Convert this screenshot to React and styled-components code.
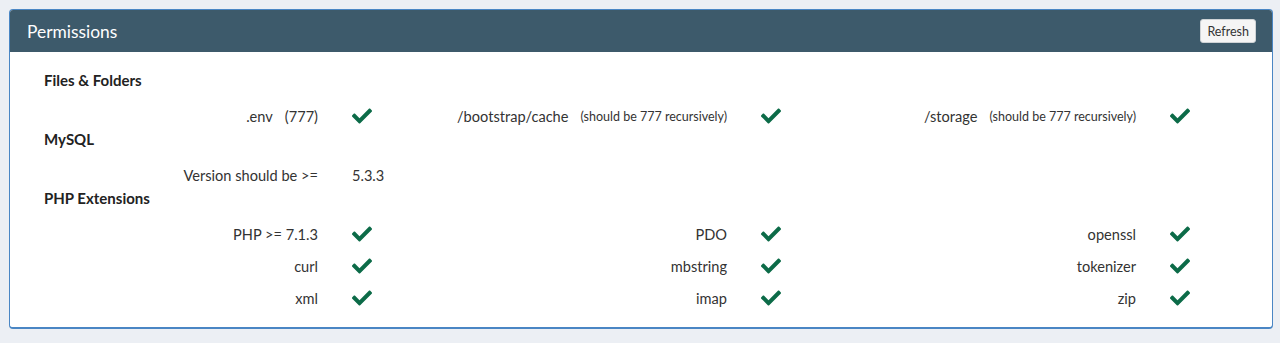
import React from 'react';
import styled, { createGlobalStyle } from 'styled-components';
import { FaCheck } from 'react-icons/fa';

const GlobalStyle = createGlobalStyle`
  html, body {
    margin: 0;
    padding: 0;
    background: #eceff4;
  }
  body {
    font-family: Lato, "Noto Sans", "Liberation Sans", sans-serif;
    color: #333;
  }
`;

const Page = styled.div`
  padding: 9px 7px 16px 9px;
`;

const Card = styled.div`
  background: #fff;
  border: 1px solid #4a86c4;
  border-bottom-width: 2px;
  border-radius: 4px;
  overflow: hidden;
`;

const Header = styled.div`
  display: flex;
  align-items: center;
  justify-content: space-between;
  height: 42px;
  padding: 0 16px 0 17px;
  background: #3d5a6b;
`;

const Title = styled.h3`
  margin: 0;
  font-size: 17.4px;
  font-weight: 400;
  color: #fff;
`;

const Button = styled.button`
  height: 24px;
  padding: 0 6px;
  border: 1px solid #cfd3d6;
  border-radius: 3px;
  background: #f5f5f5;
  color: #333;
  font-family: inherit;
  font-size: 12.5px;
  cursor: pointer;
`;

const Body = styled.div`
  padding: 18px 0 15px 34px;
`;

const SectionTitle = styled.h4`
  margin: 0 0 12px;
  font-size: 15px;
  line-height: 20px;
  font-weight: 700;
  color: #222;

  div + & {
    margin-top: -1px;
  }
`;

const Grid = styled.div`
  display: grid;
  grid-template-columns: repeat(3, 292px 117px);
  row-gap: 4px;
  font-size: 14.6px;
  color: #333;
`;

const Label = styled.div`
  display: flex;
  align-items: center;
  justify-content: flex-end;
  height: 28px;
  padding-right: 18px;
  white-space: nowrap;
`;

const Note = styled.span`
  margin-left: ${(p) => p.$gap || 12}px;
  font-size: ${(p) => p.$size || 12.5}px;
`;

const Status = styled.div`
  display: flex;
  align-items: center;
  height: 28px;
  padding-left: 16px;
  color: ${(p) => (p.$text ? '#333' : '#0c6b48')};
`;

const Check = () => (
  <Status>
    <FaCheck size={20} />
  </Status>
);

const extensions = ['PHP >= 7.1.3', 'PDO', 'openssl', 'curl', 'mbstring', 'tokenizer', 'xml', 'imap', 'zip'];

export default function App() {
  return (
    <Page>
      <GlobalStyle />
      <Card>
        <Header>
          <Title>Permissions</Title>
          <Button>Refresh</Button>
        </Header>
        <Body>
          <SectionTitle>Files &amp; Folders</SectionTitle>
          <Grid>
            <Label>
              .env<Note $gap={12} $size={14.6}>(777)</Note>
            </Label>
            <Check />
            <Label>
              /bootstrap/cache<Note>(should be 777 recursively)</Note>
            </Label>
            <Check />
            <Label>
              /storage<Note>(should be 777 recursively)</Note>
            </Label>
            <Check />
          </Grid>
          <SectionTitle>MySQL</SectionTitle>
          <Grid>
            <Label>Version should be &gt;=</Label>
            <Status $text>5.3.3</Status>
          </Grid>
          <SectionTitle>PHP Extensions</SectionTitle>
          <Grid>
            {extensions.map((name) => (
              <React.Fragment key={name}>
                <Label>{name}</Label>
                <Check />
              </React.Fragment>
            ))}
          </Grid>
        </Body>
      </Card>
    </Page>
  );
}
